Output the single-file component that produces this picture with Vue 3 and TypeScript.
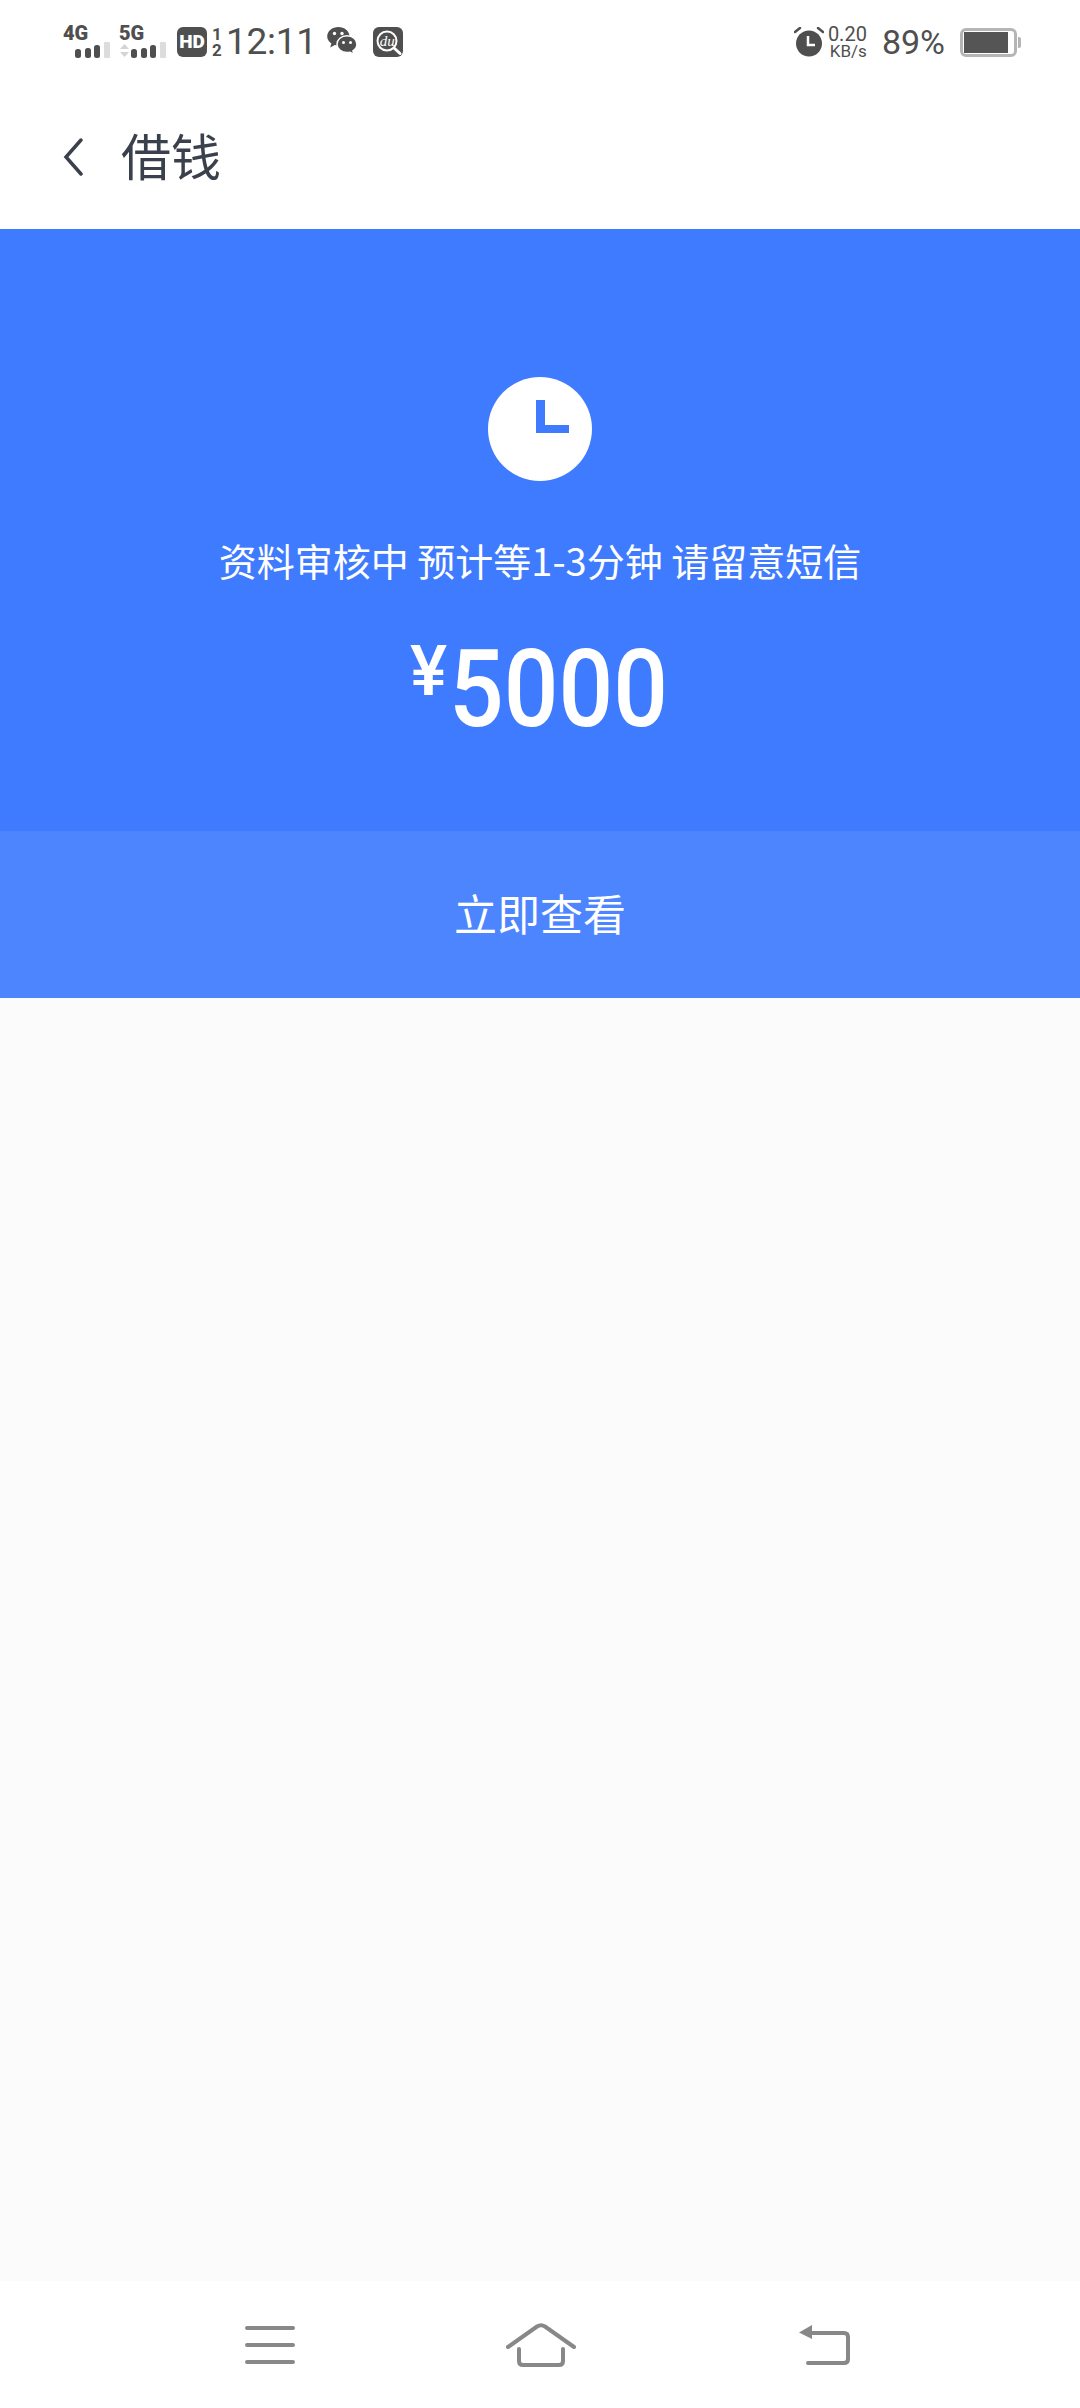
<script setup lang="ts">
const signals = [
  { label: '4G', arrows: false },
  { label: '5G', arrows: true }
]
</script>

<template>
  <div class="page">
    <div class="status-bar">
      <div class="status-left">
        <div v-for="s in signals" :key="s.label" class="signal">
          <span class="signal__label">{{ s.label }}</span>
          <svg class="signal__bars" width="48" height="17" viewBox="0 0 48 17">
            <template v-if="s.arrows">
              <path d="M1 7l4.500-5 4.500 5z M1 10l4.500 5 4.500-5z" fill="#d4d4d4" />
            </template>
            <rect x="12" y="7" width="6" height="9" rx="2.500" fill="#4f4f4f" />
            <rect x="22" y="6" width="6" height="10" rx="2.500" fill="#4f4f4f" />
            <rect x="31" y="3" width="6" height="13" rx="2.500" fill="#4f4f4f" />
            <rect x="41" y="0" width="6" height="16" rx="1" fill="#dcdcdc" />
          </svg>
        </div>
        <div class="hd">HD</div>
        <div class="sim"><span>1</span><span>2</span></div>
        <span class="time">12:11</span>
        <svg class="wechat" width="30" height="30" viewBox="0 0 30 30">
          <path d="M11.500 0C5.200 0 .2 4.100.2 9.300c0 3 1.600 5.500 4.200 7.200L3.200 20.500l4.600-2.400c1.200.3 2.400.5 3.700.5 5.800 0 11-4.200 11-9.300S17.300 0 11.500 0z" fill="#4f4f4f" />
          <path d="M20 8.800c-5.700 0-10 3.800-10 8.400s4.300 8.400 10 8.400c1.100 0 2.100-.2 3.100-.4l3.800 2.100-1-3.400c2.500-1.600 4-3.900 4-6.700 0-4.600-4.300-8.400-9.900-8.400z" fill="#4f4f4f" stroke="#fff" stroke-width="1.500" />
          <circle cx="7.500" cy="6.500" r="1.700" fill="#fff" />
          <circle cx="15" cy="6.500" r="1.700" fill="#fff" />
          <circle cx="16.500" cy="15.500" r="1.500" fill="#fff" />
          <circle cx="23.500" cy="15.500" r="1.500" fill="#fff" />
        </svg>
        <div class="du">
          <span class="du__text">du</span>
          <svg class="du__ring" width="30" height="30" viewBox="0 0 30 30">
            <circle cx="14" cy="14" r="9.500" fill="none" stroke="#fff" stroke-width="2" />
            <path d="M21 21l6 5.500" stroke="#fff" stroke-width="3" stroke-linecap="round" />
          </svg>
        </div>
      </div>
      <div class="status-right">
        <svg class="alarm" width="30" height="30" viewBox="0 0 30 30">
          <circle cx="15" cy="16.500" r="13" fill="#4f4f4f" />
          <path d="M14 9v9h7" fill="none" stroke="#fff" stroke-width="2.500" />
          <path d="M1 5l5-4M29 5l-5-4" stroke="#4f4f4f" stroke-width="2.500" stroke-linecap="round" />
        </svg>
        <div class="speed"><span>0.20</span><span class="speed__unit">KB/s</span></div>
        <span class="percent">89%</span>
        <div class="battery"><div class="battery__level"></div></div>
      </div>
    </div>

    <header class="top-bar">
      <svg class="back" width="20" height="38" viewBox="0 0 20 38">
        <path d="M18 2L3 19l15 17" fill="none" stroke="#3a404c" stroke-width="3.500" stroke-linecap="round" />
      </svg>
      <h1 class="title">借钱</h1>
    </header>

    <section class="hero">
      <svg class="clock" width="104" height="104" viewBox="0 0 104 104">
        <circle cx="52" cy="52" r="52" fill="#fff" />
        <path d="M48 23h9v25h24v8H48z" fill="#3f7bff" />
      </svg>
      <p class="hero__msg">资料审核中 预计等1-3分钟 请留意短信</p>
      <div class="amount"><span class="amount__sign">¥</span><span class="amount__num">5000</span></div>
    </section>

    <div class="action">立即查看</div>

    <main class="content"></main>

    <nav class="nav-bar">
      <svg class="nav-menu" width="50" height="40" viewBox="0 0 50 40">
        <path d="M2 3h46M2 20h46M2 37h46" stroke="#888" stroke-width="4" stroke-linecap="round" />
      </svg>
      <svg class="nav-home" width="70" height="44" viewBox="0 0 70 44">
        <path d="M2 24L31 3.500q4-2.500 8 0L68 24" fill="none" stroke="#888" stroke-width="4" stroke-linecap="round" />
        <path d="M13 26v12q0 4 4 4h36q4 0 4-4V26" fill="none" stroke="#888" stroke-width="4" stroke-linecap="round" />
      </svg>
      <svg class="nav-back" width="52" height="42" viewBox="0 0 52 42">
        <path d="M12 9h34q4 0 4 4v22q0 4-4 4H10" fill="none" stroke="#888" stroke-width="4" stroke-linecap="round" />
        <path d="M14 1v14L1 8.500z" fill="#888" />
      </svg>
    </nav>
  </div>
</template>

<style>
html,
body {
  margin: 0;
  background: #fff;
}
</style>

<style scoped>
.page {
  width: 1080px;
  height: 2408px;
  display: flex;
  flex-direction: column;
  font-family: "Noto Sans CJK SC", "Noto Sans", sans-serif;
  background: #fff;
}

.status-bar {
  height: 84px;
  flex: none;
  display: flex;
  align-items: center;
  justify-content: space-between;
  padding: 0 60px 0 63px;
  color: #4f4f4f;
  font-family: Roboto, sans-serif;
}

.status-left,
.status-right {
  display: flex;
  align-items: center;
}

.signal {
  display: flex;
  flex-direction: column;
  width: 48px;
  margin-right: 8px;
}

.signal__label {
  font-size: 20px;
  line-height: 15px;
  font-weight: 900;
}

.signal__bars {
  margin-top: 1px;
}

.hd {
  width: 30px;
  height: 30px;
  margin-left: 2px;
  border-radius: 6px;
  background: #4f4f4f;
  color: #fff;
  font-size: 19px;
  font-weight: 900;
  line-height: 30px;
  text-align: center;
}

.sim {
  display: flex;
  flex-direction: column;
  align-items: center;
  width: 12px;
  margin-left: 4px;
  font-size: 17px;
  font-weight: 700;
  line-height: 16px;
}

.time {
  margin-left: 3px;
  font-size: 37px;
  line-height: 44px;
  letter-spacing: -0.3px;
}

.wechat {
  margin-left: 10px;
}

.du {
  position: relative;
  width: 30px;
  height: 30px;
  margin-left: 16px;
  border-radius: 6px;
  background: #4f4f4f;
  color: #fff;
}

.du__text {
  position: absolute;
  left: 7px;
  top: 4px;
  font-size: 15px;
  line-height: 20px;
  font-style: italic;
  font-family: "Liberation Serif", serif;
}

.du__ring {
  position: absolute;
  inset: 0;
}

.alarm {
  margin-right: 4px;
}

.speed {
  display: flex;
  flex-direction: column;
  align-items: flex-end;
  font-size: 20px;
  line-height: 18px;
}

.speed__unit {
  font-size: 17px;
  line-height: 16px;
}

.percent {
  margin-left: 15px;
  font-size: 34px;
  line-height: 40px;
}

.battery {
  position: relative;
  box-sizing: border-box;
  width: 57px;
  height: 29px;
  margin-left: 15px;
  margin-right: 3px;
  border: 3px solid #b5b5b5;
  border-radius: 6px;
  padding: 1px;
}

.battery::after {
  content: "";
  position: absolute;
  right: -7px;
  top: 6px;
  width: 3px;
  height: 11px;
  background: #b5b5b5;
  border-radius: 0 2px 2px 0;
}

.battery__level {
  width: 44px;
  height: 100%;
  background: #555;
}

.top-bar {
  height: 145px;
  flex: none;
  display: flex;
  align-items: center;
  padding: 0 0 6px 63px;
  box-sizing: border-box;
}

.back {
  flex: none;
  margin-top: 6px;
}

.title {
  margin: 0 0 0 38px;
  font-size: 50px;
  line-height: 60px;
  font-weight: 400;
  color: #3a404c;
}

.hero {
  height: 602px;
  flex: none;
  box-sizing: border-box;
  padding-top: 148px;
  display: flex;
  flex-direction: column;
  align-items: center;
  background: #3f7bff;
  color: #fff;
}

.clock {
  flex: none;
}

.hero__msg {
  margin: 53px 0 0;
  font-size: 38px;
  line-height: 52px;
  white-space: pre;
}

.amount {
  display: flex;
  align-items: flex-start;
  margin-top: 43px;
  margin-left: -4px;
  font-family: Roboto, sans-serif;
  font-weight: 500;
}

.amount__sign {
  font-size: 70px;
  line-height: 84px;
  margin-right: 2px;
}

.amount__num {
  font-size: 107px;
  line-height: 122px;
  width: 217px;
  transform: scaleX(0.9);
  transform-origin: left center;
}

.action {
  height: 167px;
  flex: none;
  box-sizing: border-box;
  padding-bottom: 6px;
  display: flex;
  align-items: center;
  justify-content: center;
  background: #4d85ff;
  color: #fff;
  font-size: 43px;
}

.content {
  flex: 1;
  background: #fbfbfb;
}

.nav-bar {
  height: 127px;
  flex: none;
  box-sizing: border-box;
  display: flex;
  align-items: center;
  padding: 0 0 0 245px;
  background: #fff;
}

.nav-home {
  margin-left: 211px;
}

.nav-back {
  margin-left: 222px;
}
</style>
